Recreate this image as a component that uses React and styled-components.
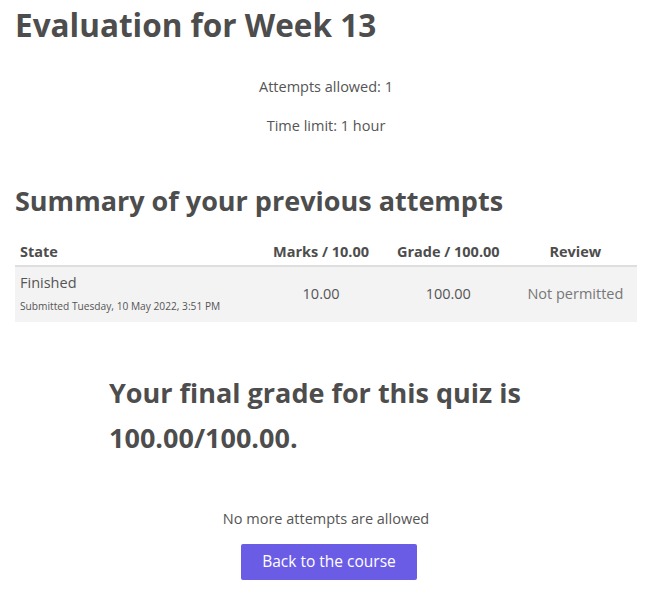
import React from 'react';
import styled, { createGlobalStyle } from 'styled-components';

const GlobalStyle = createGlobalStyle`
  body {
    margin: 0;
    background: #fff;
    font-family: "Open Sans", "Noto Sans", sans-serif;
    color: #555;
  }
`;

const Page = styled.main`
  padding: 0 14px 0 15px;
`;

const Title = styled.h1`
  margin: 0;
  padding-top: 3px;
  font-size: 31.5px;
  font-weight: 700;
  color: #4d4d4d;
  line-height: 44px;
`;

const Info = styled.div`
  margin-top: 31px;
  display: flex;
  flex-direction: column;
  align-items: center;
  gap: 21px;
  font-size: 14.5px;
  line-height: 18px;
`;

const Subtitle = styled.h2`
  margin: 48px 0 0 0;
  font-size: 27px;
  font-weight: 700;
  color: #4d4d4d;
  line-height: 36px;
`;

const Table = styled.table`
  width: 100%;
  margin-top: 16px;
  border-collapse: collapse;
  font-size: 14.5px;
`;

const Th = styled.th`
  text-align: ${p => p.$align || 'center'};
  font-weight: 700;
  color: #4d4d4d;
  padding: 7px 5px 3px;
  border-bottom: 2px solid #dedede;
  line-height: 20px;
`;

const Row = styled.tr`
  background: #f3f3f3;
`;

const Td = styled.td`
  text-align: ${p => p.$align || 'center'};
  padding: 5px 5px 8px;
  vertical-align: middle;
  color: ${p => p.$muted ? '#777' : '#555'};
`;

const State = styled.div`
  font-size: 14.5px;
  line-height: 22px;
`;

const Submitted = styled.div`
  margin-top: 4px;
  font-size: 10.2px;
  line-height: 16px;
`;

const Final = styled.h3`
  margin: 48px auto 0;
  width: 434px;
  font-size: 27px;
  font-weight: 700;
  line-height: 45px;
  color: #4d4d4d;
`;

const Footer = styled.div`
  margin-top: 49px;
  display: flex;
  flex-direction: column;
  align-items: center;
  gap: 16px;
  font-size: 14.5px;
`;

const Button = styled.button`
  margin-left: 6px;
  background: #6b5ce6;
  color: #fff;
  border: none;
  border-radius: 2px;
  font-family: inherit;
  font-size: 15.5px;
  padding: 7px 21px 8px;
  line-height: 21px;
  cursor: pointer;
`;

export default function App() {
  return (
    <Page>
      <GlobalStyle />
      <Title>Evaluation for Week 13</Title>
      <Info>
        <div>Attempts allowed: 1</div>
        <div>Time limit: 1 hour</div>
      </Info>
      <Subtitle>Summary of your previous attempts</Subtitle>
      <Table>
        <thead>
          <tr>
            <Th $align="left">State</Th>
            <Th>Marks / 10.00</Th>
            <Th>Grade / 100.00</Th>
            <Th>Review</Th>
          </tr>
        </thead>
        <tbody>
          <Row>
            <Td $align="left">
              <State>Finished</State>
              <Submitted>Submitted Tuesday, 10 May 2022, 3:51 PM</Submitted>
            </Td>
            <Td>10.00</Td>
            <Td>100.00</Td>
            <Td $muted>Not permitted</Td>
          </Row>
        </tbody>
      </Table>
      <Final>Your final grade for this quiz is 100.00/100.00.</Final>
      <Footer>
        <div>No more attempts are allowed</div>
        <Button>Back to the course</Button>
      </Footer>
    </Page>
  );
}
